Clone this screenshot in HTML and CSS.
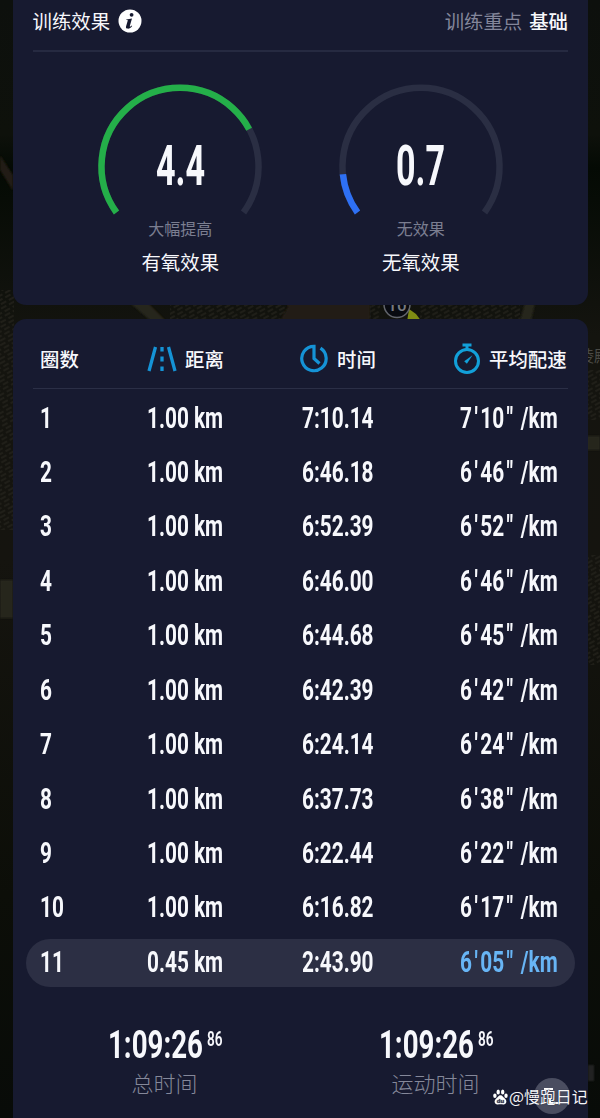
FILE: index.html
```html
<!DOCTYPE html>
<html lang="zh-CN">
<head>
<meta charset="utf-8">
<title>训练效果</title>
<link rel="stylesheet" href="styles.css">
</head>
<body>
<svg class="map" width="600" height="1118" viewBox="0 0 600 1118" aria-hidden="true">
  <defs>
    <pattern id="blocks" width="9" height="8" patternUnits="userSpaceOnUse" patternTransform="rotate(-28)">
      <path d="M0 1h6M2 5h6" stroke="#24221c" stroke-width="1.5"/>
    </pattern>
    <linearGradient id="land" x2="0" y2="1">
      <stop offset="0" stop-color="#0d100d"/><stop offset=".12" stop-color="#0e110b"/>
      <stop offset=".15" stop-color="#040a04"/><stop offset=".3" stop-color="#14140f"/>
      <stop offset=".5" stop-color="#15140f"/><stop offset=".8" stop-color="#0c0e08"/>
      <stop offset="1" stop-color="#080b08"/>
    </linearGradient>
    <filter id="soft"><feGaussianBlur stdDeviation="1.2"/></filter>
  </defs>
  <path fill="url(#land)" d="M0 0h600v1118H0z"/>
  <path fill="url(#blocks)" d="M0 290h14v240H0zM170 303h210v18H170zM420 303h100v18H420zM586 370h14v50h-14zM586 555h14v110h-14z"/>
  <g filter="url(#soft)">
    <path fill="#211d12" d="M0 155l13 20v16L0 170zM290 303h80v18h-90z"/>
    <path fill="#28261c" d="M130 303h18l18 18h-15zM0 580h13v38H0zM587 436h13v14h-13zM525 303h10l-4 18h-11z"/>
    <path fill="#222222" d="M588 1065h6v16h-6z"/>
  </g>
  <path d="M409 309l7 5 6 8h-15z" fill="#7f8c13"/>
  <circle cx="397" cy="304.500" r="13" fill="#080a10" stroke="#62656c" stroke-width="1.500"/>
  <text class="map-marker" x="397" y="311" text-anchor="middle">10</text>
  <text class="map-place" x="578" y="362">陵殿</text>
</svg>
<main class="screen">
  <section class="card effect">
    <header class="effect-head">
      <h1>训练效果</h1>
      <svg class="info" width="24" height="24" viewBox="0 0 24 24"><circle cx="12" cy="12" r="11.500" fill="#fff"/><circle cx="13.600" cy="5.800" r="1.900" fill="#171a30"/><path d="M8.300 10.500l5.700-1-2.200 7.400c-.2 1 .5.900 1.900-.5l.5.500c-1.500 2-3 2.900-4.600 2.700-1.500-.2-1.900-1-1.500-2.400l1.600-5.500c.2-.7-.1-.8-1.500-.7z" fill="#171a30"/></svg>
      <p class="focus"><span>训练重点</span><strong>基础</strong></p>
    </header>
    <div class="gauges">
      <div class="gauge">
        <div class="dial">
          <svg width="170" height="136" viewBox="0 0 170 136"><path class="track" d="M21.500 131.500A78.500 78.500 0 1 1 148.500 131.500"/><path class="aerobic" pathLength="100" d="M21.500 131.500A78.500 78.500 0 1 1 148.500 131.500"/></svg>
          <b class="score"><span>4.4</span></b>
        </div>
        <p class="rating">大幅提高</p>
        <p class="kind">有氧效果</p>
      </div>
      <div class="gauge">
        <div class="dial">
          <svg width="170" height="136" viewBox="0 0 170 136"><path class="track" d="M21.500 131.500A78.500 78.500 0 1 1 148.500 131.500"/><path class="anaerobic" pathLength="100" d="M21.500 131.500A78.500 78.500 0 1 1 148.500 131.500"/></svg>
          <b class="score"><span>0.7</span></b>
        </div>
        <p class="rating">无效果</p>
        <p class="kind">无氧效果</p>
      </div>
    </div>
  </section>

  <section class="card laps">
    <div class="cols lap-head">
      <span>圈数</span>
      <span class="label"><svg width="30" height="26" viewBox="0 0 30 26" fill="none" stroke="#1593d6" stroke-width="3.300"><path d="M8.500 1L2 25M21.500 1L28 25M15 1v4.500M15 10.500v5M15 20.500v4.500"/></svg>距离</span>
      <span class="label time"><svg width="28" height="29" viewBox="0 0 28 29" fill="none" stroke="#1593d6" stroke-width="3.200"><path d="M20.500 4.200A12.200 12.200 0 1 1 14 2.300V14.500L19.500 19.500"/></svg>时间</span>
      <span class="label pace-label"><svg width="28" height="31" viewBox="0 0 28 31" fill="none" stroke="#12a0d9" stroke-width="3"><circle cx="14" cy="18" r="11.500"/><path d="M9.500 2h9M14 3v4"/><path d="M11.200 18.300L19.500 12.300l-5.600 8.500z" fill="#12a0d9" stroke="none"/></svg>平均配速</span>
    </div>
    <div class="rows">
      <div class="cols row"><b>1</b><b>1.00 km</b><b>7:10.14</b><b>7<i>'</i>10<i>"</i> /km</b></div>
      <div class="cols row"><b>2</b><b>1.00 km</b><b>6:46.18</b><b>6<i>'</i>46<i>"</i> /km</b></div>
      <div class="cols row"><b>3</b><b>1.00 km</b><b>6:52.39</b><b>6<i>'</i>52<i>"</i> /km</b></div>
      <div class="cols row"><b>4</b><b>1.00 km</b><b>6:46.00</b><b>6<i>'</i>46<i>"</i> /km</b></div>
      <div class="cols row"><b>5</b><b>1.00 km</b><b>6:44.68</b><b>6<i>'</i>45<i>"</i> /km</b></div>
      <div class="cols row"><b>6</b><b>1.00 km</b><b>6:42.39</b><b>6<i>'</i>42<i>"</i> /km</b></div>
      <div class="cols row"><b>7</b><b>1.00 km</b><b>6:24.14</b><b>6<i>'</i>24<i>"</i> /km</b></div>
      <div class="cols row"><b>8</b><b>1.00 km</b><b>6:37.73</b><b>6<i>'</i>38<i>"</i> /km</b></div>
      <div class="cols row"><b>9</b><b>1.00 km</b><b>6:22.44</b><b>6<i>'</i>22<i>"</i> /km</b></div>
      <div class="cols row"><b>10</b><b>1.00 km</b><b>6:16.82</b><b>6<i>'</i>17<i>"</i> /km</b></div>
      <div class="cols row best"><b>11</b><b>0.45 km</b><b>2:43.90</b><b>6<i>'</i>05<i>"</i> /km</b></div>
    </div>
    <div class="totals">
      <div class="total"><p class="clock"><b>1:09:26</b><small>86</small></p><p class="caption">总时间</p></div>
      <div class="total"><p class="clock"><b>1:09:26</b><small>86</small></p><p class="caption">运动时间</p></div>
    </div>
  </section>
</main>
<div class="float-button"><svg width="36" height="36" viewBox="0 0 36 36" fill="none" stroke="#fff" stroke-width="2"><path d="M10 11h9M16 20v5h10"/></svg></div>
<div class="watermark">
  <svg width="15" height="16" viewBox="0 0 15 16" fill="#fff"><ellipse cx="1.900" cy="6.700" rx="1.700" ry="2.300"/><ellipse cx="5.200" cy="2.900" rx="1.700" ry="2.500"/><ellipse cx="9.700" cy="2.900" rx="1.700" ry="2.500"/><ellipse cx="13" cy="6.700" rx="1.700" ry="2.300"/><path d="M7.500 6.300c2 0 2.600 2 4.300 3.300 3 2.600 1.300 6.200-1.500 5.800-2-.3-3.600-.3-5.600 0-2.800.4-4.500-3.200-1.500-5.800C4.900 8.300 5.500 6.300 7.500 6.300z"/><text class="paw-text" x="7.500" y="13.800" text-anchor="middle">du</text></svg>
  <span>@慢跑日记</span>
</div>
</body>
</html>
```
FILE: styles.css
```css
* { box-sizing: border-box; }
body {
  margin: 0;
  width: 600px;
  height: 1118px;
  position: relative;
  overflow: hidden;
  background: #0d0f0c;
  color: #f7f8fc;
  font-family: "Liberation Sans", "Noto Sans CJK SC", sans-serif;
}
h1, p { margin: 0; font-weight: 400; }
svg { display: block; flex: none; }
.map { position: absolute; inset: 0; }
.map-marker { font: 500 17px Roboto, sans-serif; fill: #777a80; }
.map-place { font: 16px "Noto Sans CJK SC", sans-serif; fill: #4a4a45; }
.screen {
  position: relative;
  display: flex;
  flex-direction: column;
  gap: 14px;
  padding: 0 12px 0 13px;
  height: 1118px;
}
.card { background: #171a30; }
.effect { height: 305px; border-radius: 0 0 13px 13px; padding: 0 20px; flex: none; }
.laps { flex: 1; border-radius: 13px 13px 0 0; overflow: hidden; }
.effect-head {
  height: 51.500px;
  border-bottom: 2px solid #262a41;
  display: flex;
  align-items: center;
  padding-bottom: 8px;
  line-height: 28px;
}
h1, .focus { font-size: 19.400px; padding-top: 3px; }
h1 { margin-left: -.5px; }
.info { margin-left: 8px; }
.focus { margin-left: auto; display: flex; gap: 7px; }
.focus span { color: #83869a; }
.focus strong { font-weight: 500; }
.gauges { display: grid; grid-template-columns: 240.500px 240.500px; justify-content: center; padding-top: 29.500px; }
.gauge { display: flex; flex-direction: column; align-items: center; }
.dial { display: grid; place-items: center; }
.dial svg, .score { grid-area: 1 / 1; }
.dial path { fill: none; stroke-width: 6.500; }
.dial .track { stroke: #2a2e43; }
.dial .aerobic { stroke: #24af49; stroke-dasharray: 74.500 200; }
.dial .anaerobic { stroke: #2e70f4; stroke-dasharray: 12 200; }
.score { font: 700 55px/60px Roboto, sans-serif; transform: scaleX(.62); padding-top: 33px; }
.rating { color: #7b7e90; font-size: 16px; line-height: 24px; margin-top: 1px; }
.kind { font-size: 19.400px; line-height: 28px; margin-top: 7px; }
.cols { display: grid; grid-template-columns: 107px 155px 158px minmax(0, 1fr); align-items: center; }
.lap-head {
  height: 70px;
  margin: 0 20px;
  padding: 10px 0 0 7px;
  grid-template-columns: 107px 153px 153px minmax(0, 1fr);
  border-bottom: 1.500px solid #2b2f46;
  font-size: 19.400px;
  font-weight: 500;
}
.label { display: flex; align-items: center; gap: 8px; white-space: nowrap; }
.label.time { gap: 9px; }
.rows { display: grid; grid-template: repeat(11, 48px) / minmax(0, 1fr); gap: 6.450px; margin: 5.500px 13px 0; }
.row { padding-left: 14px; border-radius: 24px; }
.row b {
  font: 700 29.500px/47px Roboto, sans-serif;
  transform: scaleX(.705);
  transform-origin: 0 50%;
  white-space: nowrap;
  width: max-content;
  padding-bottom: 1px;
}
.row i { font-style: normal; padding: 0 3.500px; }
.best { background: #2c2f44; }
.best b:last-child { color: #68b5f5; }
.totals { display: grid; grid-template-columns: 271px 271px; padding: 36px 0 0 16px; }
.total { display: flex; flex-direction: column; align-items: center; }
.clock { display: flex; width: 114px; height: 44px; }
.clock b { font: 700 39.500px/44px Roboto, sans-serif; transform: scaleX(.7); transform-origin: 0 50%; width: 99px; flex: none; }
.clock small { font: 600 20px/32px Roboto, sans-serif; transform: scaleX(.68); transform-origin: 0 50%; width: 17px; }
.caption { font-size: 22px; line-height: 32px; color: #85889a; margin-top: 2px; font-weight: 300; }
.float-button { position: absolute; left: 534px; top: 1078px; width: 36px; height: 36px; border-radius: 50%; background: #4a4d60; }
.watermark { position: absolute; left: 493px; top: 1086px; display: flex; align-items: center; gap: 1px; font: 15.900px/22px "Noto Sans CJK SC", sans-serif; color: #f5f5f8; text-shadow: 0 0 1px #171a30; white-space: nowrap; }
.paw-text { font: 700 6px "Liberation Sans", sans-serif; fill: #34384b; }
```
